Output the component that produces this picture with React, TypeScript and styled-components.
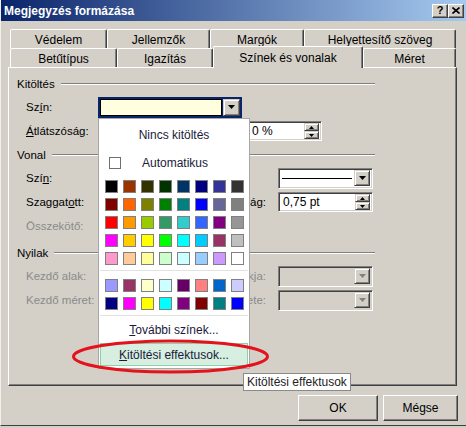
import React from "react";
import styled, { createGlobalStyle } from "styled-components";

const GlobalStyle = createGlobalStyle`
  html, body {
    margin: 0;
    padding: 0;
    background: #d4d0c8;
  }
  body {
    font-family: "Liberation Sans", Arial, sans-serif;
    font-size: 11.5px;
    color: #000;
  }
`;

const Window = styled.div`
  position: relative;
  width: 466px;
  height: 426px;
  box-sizing: border-box;
  border-left: 1px solid #f1f0ec;
  border-bottom: 1px solid #404040;
  background: #d4d0c8;
  overflow: hidden;
`;

const TitleBar = styled.div`
  height: 21px;
  display: flex;
  align-items: center;
  padding: 0 2px 0 3px;
  background: linear-gradient(to right, #0a246a, #a6caf0);
`;

const Title = styled.span`
  color: #fff;
  font-weight: bold;
  font-size: 12px;
`;

const TitleButtons = styled.div`
  margin-left: auto;
  display: flex;
`;

const CapButton = styled.div`
  width: 16px;
  height: 14px;
  box-sizing: border-box;
  background: #d4d0c8;
  border-top: 1px solid #fff;
  border-left: 1px solid #fff;
  border-right: 1px solid #404040;
  border-bottom: 1px solid #404040;
  box-shadow: inset -1px -1px #808080;
  display: flex;
  align-items: center;
  justify-content: center;
  font-weight: bold;
  font-size: 11px;
  line-height: 1;
`;

const TabArea = styled.div`
  margin: 8px 0 0 9px;
`;

const TabRow = styled.div`
  display: flex;
  height: 19px;
`;

const Tab = styled.div<{ $w: number; $selected?: boolean }>`
  width: ${(p) => p.$w}px;
  height: ${(p) => (p.$selected ? 22 : 19)}px;
  margin-top: ${(p) => (p.$selected ? -2 : 0)}px;
  position: relative;
  z-index: ${(p) => (p.$selected ? 2 : 1)};
  box-sizing: border-box;
  background: #d4d0c8;
  border-top: 1px solid #fff;
  border-left: 1px solid #fff;
  border-right: 1px solid #404040;
  box-shadow: inset -1px 0 #808080;
  border-radius: 2px 2px 0 0;
  display: flex;
  justify-content: center;
  padding-top: ${(p) => (p.$selected ? 4 : 3)}px;
  font-size: 12px;
`;

const Panel = styled.div`
  margin-left: 7px;
  width: 449px;
  height: 319px;
  box-sizing: border-box;
  border-top: 1px solid #fff;
  border-left: 1px solid #fff;
  border-right: 1px solid #404040;
  border-bottom: 1px solid #404040;
  box-shadow: inset -1px -1px #808080;
  padding: 5px 0 0 8px;
`;

const Section = styled.div<{ $gap: number }>`
  width: 358px;
  margin-top: ${(p) => p.$gap}px;
`;

const SectionHead = styled.div`
  display: flex;
  align-items: center;
  height: 22px;
`;

const Rule = styled.div`
  flex: 1;
  margin-left: 6px;
  border-top: 1px solid #808080;
  border-bottom: 1px solid #fff;
`;

const Row = styled.div`
  display: flex;
  align-items: center;
  height: 24px;
  padding-left: 9px;
`;

const Label = styled.span<{ $disabled?: boolean }>`
  width: 72px;
  flex: none;
  color: ${(p) => (p.$disabled ? "#8a8a8a" : "#000")};
`;

const SideLabel = styled.span<{ $disabled?: boolean; $left?: boolean }>`
  width: 80px;
  flex: none;
  box-sizing: border-box;
  padding: ${(p) => (p.$left ? "0 0 0 12px" : "0 12px 0 0")};
  text-align: ${(p) => (p.$left ? "left" : "right")};
  color: ${(p) => (p.$disabled ? "#8a8a8a" : "#000")};
`;

const Field = styled.div<{ $w: number; $bg?: string }>`
  width: ${(p) => p.$w}px;
  height: 20px;
  flex: none;
  box-sizing: border-box;
  display: flex;
  align-items: center;
  background: ${(p) => p.$bg || "#fff"};
  border-top: 1px solid #808080;
  border-left: 1px solid #808080;
  border-right: 1px solid #fff;
  border-bottom: 1px solid #fff;
  box-shadow: inset 1px 1px #404040, inset -1px -1px #d4d0c8;
  padding: 2px;
`;

const FieldText = styled.span`
  flex: 1;
  padding-left: 2px;
  font-size: 12px;
`;

const LineSample = styled.div`
  flex: 1;
  margin: 0 2px 0 1px;
  border-top: 1px solid #000;
`;

const Raised = styled.div<{ $w: number; $h: number }>`
  width: ${(p) => p.$w}px;
  height: ${(p) => p.$h}px;
  flex: none;
  box-sizing: border-box;
  background: #d4d0c8;
  border-top: 1px solid #d4d0c8;
  border-left: 1px solid #d4d0c8;
  border-right: 1px solid #404040;
  border-bottom: 1px solid #404040;
  box-shadow: inset 1px 1px #fff, inset -1px -1px #808080;
  display: flex;
  align-items: center;
  justify-content: center;
`;

const SpinStack = styled.div`
  display: flex;
  flex-direction: column;
`;

const FocusCombo = styled.div`
  width: 144px;
  height: 21px;
  box-sizing: border-box;
  display: flex;
  align-items: stretch;
  border: 1px solid #0a246a;
  background: #0a246a;
  padding: 1px;
  gap: 1px;
`;

const FocusSwatch = styled.div`
  flex: 1;
  background: #ffffe0;
  border: 1px solid #000;
`;

const Spacer = styled.div<{ $w: number }>`
  width: ${(p) => p.$w}px;
  flex: none;
`;

const Footer = styled.div`
  display: flex;
  justify-content: flex-end;
  gap: 5px;
  margin-top: 9px;
  padding-right: 8px;
`;

const Button = styled.div<{ $w: number }>`
  width: ${(p) => p.$w}px;
  height: 26px;
  box-sizing: border-box;
  background: #d4d0c8;
  border-top: 1px solid #fff;
  border-left: 1px solid #fff;
  border-right: 1px solid #404040;
  border-bottom: 1px solid #404040;
  box-shadow: inset -1px -1px #808080;
  display: flex;
  align-items: center;
  justify-content: center;
  font-size: 12px;
`;

const Popup = styled.div`
  position: absolute;
  left: 97px;
  top: 118px;
  width: 152px;
  height: 251px;
  box-sizing: border-box;
  background: #fff;
  border: 1px solid #a8a8a8;
  z-index: 5;
  display: flex;
  flex-direction: column;
`;

const MenuItem = styled.div<{ $h: number; $top?: number }>`
  height: ${(p) => p.$h}px;
  margin-top: ${(p) => p.$top || 0}px;
  display: flex;
  align-items: center;
  justify-content: center;
  color: #1a1a3a;
  font-size: 12px;
`;

const AutoRow = styled.div`
  height: 24px;
  margin-top: 4px;
  display: flex;
  align-items: center;
  padding-left: 10px;
  font-size: 12px;
  color: #1a1a3a;
`;

const CheckBox = styled.div`
  width: 12px;
  height: 12px;
  box-sizing: border-box;
  border: 1px solid #707070;
  background: #fff;
  margin-right: 21px;
`;

const Grid = styled.div<{ $top: number }>`
  display: grid;
  grid-template-columns: repeat(8, 13px);
  grid-auto-rows: 13px;
  gap: 5px;
  margin-top: ${(p) => p.$top}px;
  padding-left: 6px;
`;

const Swatch = styled.div<{ $c: string }>`
  box-sizing: border-box;
  border: 1px solid #808080;
  background: ${(p) => p.$c};
`;

const Separator = styled.div<{ $top: number }>`
  margin: ${(p) => p.$top}px 1px 0;
  border-top: 1px solid #e2e2e2;
`;

const HotItem = styled.div`
  height: 23px;
  margin: 1px 1px 0;
  box-sizing: border-box;
  background: #d6efe0;
  border: 1px solid #90d0a8;
  display: flex;
  align-items: center;
  justify-content: center;
  font-size: 12px;
  color: #1a1a3a;
`;

const Tooltip = styled.div`
  position: absolute;
  left: 242px;
  top: 373px;
  height: 18px;
  box-sizing: border-box;
  padding: 0 3px;
  background: #fff;
  border: 1px solid #8a8a8a;
  display: flex;
  align-items: center;
  font-size: 12px;
  color: #222;
  z-index: 6;
`;

const Mark = styled.svg`
  position: absolute;
  left: 70px;
  top: 338px;
  z-index: 7;
  overflow: visible;
`;

const DownArrow = ({ color = "#000" }: { color?: string }) => (
  <svg width="7" height="4" viewBox="0 0 7 4">
    <path d="M0 0h7L3.5 4z" fill={color} />
  </svg>
);

const UpArrow = () => (
  <svg width="5" height="3" viewBox="0 0 5 3">
    <path d="M0 3h5L2.5 0z" fill="#000" />
  </svg>
);

const SmallDown = () => (
  <svg width="5" height="3" viewBox="0 0 5 3">
    <path d="M0 0h5L2.5 3z" fill="#000" />
  </svg>
);

const Spinner = ({ w, value }: { w: number; value: string }) => (
  <Field $w={w}>
    <FieldText>{value}</FieldText>
    <SpinStack>
      <Raised $w={15} $h={8}>
        <UpArrow />
      </Raised>
      <Raised $w={15} $h={8}>
        <SmallDown />
      </Raised>
    </SpinStack>
  </Field>
);

const Combo = ({
  w,
  disabled,
  line,
}: {
  w: number;
  disabled?: boolean;
  line?: boolean;
}) => (
  <Field $w={w} $bg={disabled ? "#d4d0c8" : "#fff"} style={{ height: 21 }}>
    {line ? <LineSample /> : <FieldText />}
    <Raised $w={16} $h={16}>
      <DownArrow color={disabled ? "#808080" : "#000"} />
    </Raised>
  </Field>
);

const standard = [
  "#000000", "#993300", "#333300", "#003300", "#003366", "#000080", "#333399", "#333333",
  "#800000", "#ff6600", "#808000", "#008000", "#008080", "#0000ff", "#666699", "#808080",
  "#ff0000", "#ff9900", "#99cc00", "#339966", "#33cccc", "#3366ff", "#800080", "#969696",
  "#ff00ff", "#ffcc00", "#ffff00", "#00ff00", "#00ffff", "#00ccff", "#993366", "#c0c0c0",
  "#ff99cc", "#ffcc99", "#ffff99", "#ccffcc", "#ccffff", "#99ccff", "#cc99ff", "#ffffff",
];

const extra = [
  "#9999ff", "#993366", "#ffffcc", "#ccffff", "#660066", "#ff8080", "#0066cc", "#ccccff",
  "#000080", "#ff00ff", "#ffff00", "#00ffff", "#800080", "#800000", "#008080", "#0000ff",
];

const rowTabs = [
  { label: "Védelem", w: 97 },
  { label: "Jellemzők", w: 103 },
  { label: "Margók", w: 94 },
  { label: "Helyettesítő szöveg", w: 152 },
];

const frontTabs = [
  { label: "Betűtípus", w: 107 },
  { label: "Igazítás", w: 96 },
  { label: "Színek és vonalak", w: 150 },
  { label: "Méret", w: 93 },
];

export default function App() {
  return (
    <Window>
      <GlobalStyle />
      <TitleBar>
        <Title>Megjegyzés formázása</Title>
        <TitleButtons>
          <CapButton>?</CapButton>
          <CapButton>
            <svg width="8" height="7" viewBox="0 0 8 7">
              <path d="M0.5 0.5L7.5 6.5M7.5 0.5L0.5 6.5" stroke="#000" strokeWidth="1.6" />
            </svg>
          </CapButton>
        </TitleButtons>
      </TitleBar>

      <TabArea>
        <TabRow>
          {rowTabs.map((t) => (
            <Tab key={t.label} $w={t.w}>
              {t.label}
            </Tab>
          ))}
        </TabRow>
        <TabRow>
          {frontTabs.map((t, i) => (
            <Tab key={t.label} $w={t.w} $selected={i === 2}>
              {t.label}
            </Tab>
          ))}
        </TabRow>
      </TabArea>

      <Panel>
        <Section $gap={0}>
          <SectionHead>
            Kitöltés
            <Rule />
          </SectionHead>
          <Row>
            <Label>
              Sz<u>í</u>n:
            </Label>
            <FocusCombo>
              <FocusSwatch />
              <Raised $w={17} $h={17}>
                <DownArrow />
              </Raised>
            </FocusCombo>
          </Row>
          <Row>
            <Label>
              <u>Á</u>tlátszóság:
            </Label>
            <Spacer $w={149} />
            <Spinner w={75} value="0 %" />
          </Row>
        </Section>

        <Section $gap={1}>
          <SectionHead>
            Vonal
            <Rule />
          </SectionHead>
          <Row>
            <Label>
              Szí<u>n</u>:
            </Label>
            <Combo w={100} />
            <SideLabel $left>Stílus:</SideLabel>
            <Combo w={95} line />
          </Row>
          <Row>
            <Label>
              Szaggat<u>o</u>tt:
            </Label>
            <Combo w={100} />
            <SideLabel>Vastagság:</SideLabel>
            <Spinner w={95} value="0,75 pt" />
          </Row>
          <Row>
            <Label $disabled>Összekötő:</Label>
          </Row>
        </Section>

        <Section $gap={4}>
          <SectionHead>
            Nyilak
            <Rule />
          </SectionHead>
          <Row>
            <Label $disabled>Kezdő alak:</Label>
            <Combo w={100} disabled />
            <SideLabel $disabled>Vég alakja:</SideLabel>
            <Combo w={95} disabled />
          </Row>
          <Row>
            <Label $disabled>Kezdő méret:</Label>
            <Combo w={100} disabled />
            <SideLabel $disabled>Vég mérete:</SideLabel>
            <Combo w={95} disabled />
          </Row>
        </Section>
      </Panel>

      <Footer>
        <Button $w={80}>OK</Button>
        <Button $w={75}>Mégse</Button>
      </Footer>

      <Popup>
        <MenuItem $h={24} $top={4}>
          Nincs kitöltés
        </MenuItem>
        <AutoRow>
          <CheckBox />
          Automatikus
        </AutoRow>
        <Grid $top={5}>
          {standard.map((c, i) => (
            <Swatch key={i} $c={c} />
          ))}
        </Grid>
        <Separator $top={5} />
        <Grid $top={8}>
          {extra.map((c, i) => (
            <Swatch key={i} $c={c} />
          ))}
        </Grid>
        <Separator $top={5} />
        <MenuItem $h={24} $top={2}>
          <span>
            <u>T</u>ovábbi színek...
          </span>
        </MenuItem>
        <HotItem>
          <span>
            <u>K</u>itöltési effektusok...
          </span>
        </HotItem>
      </Popup>

      <Tooltip>Kitöltési effektusok</Tooltip>

      <Mark width="200" height="36" viewBox="0 0 200 36">
        <ellipse cx="99.5" cy="18.5" rx="97" ry="15.5" fill="none" stroke="#e3121c" strokeWidth="3" />
      </Mark>
    </Window>
  );
}
